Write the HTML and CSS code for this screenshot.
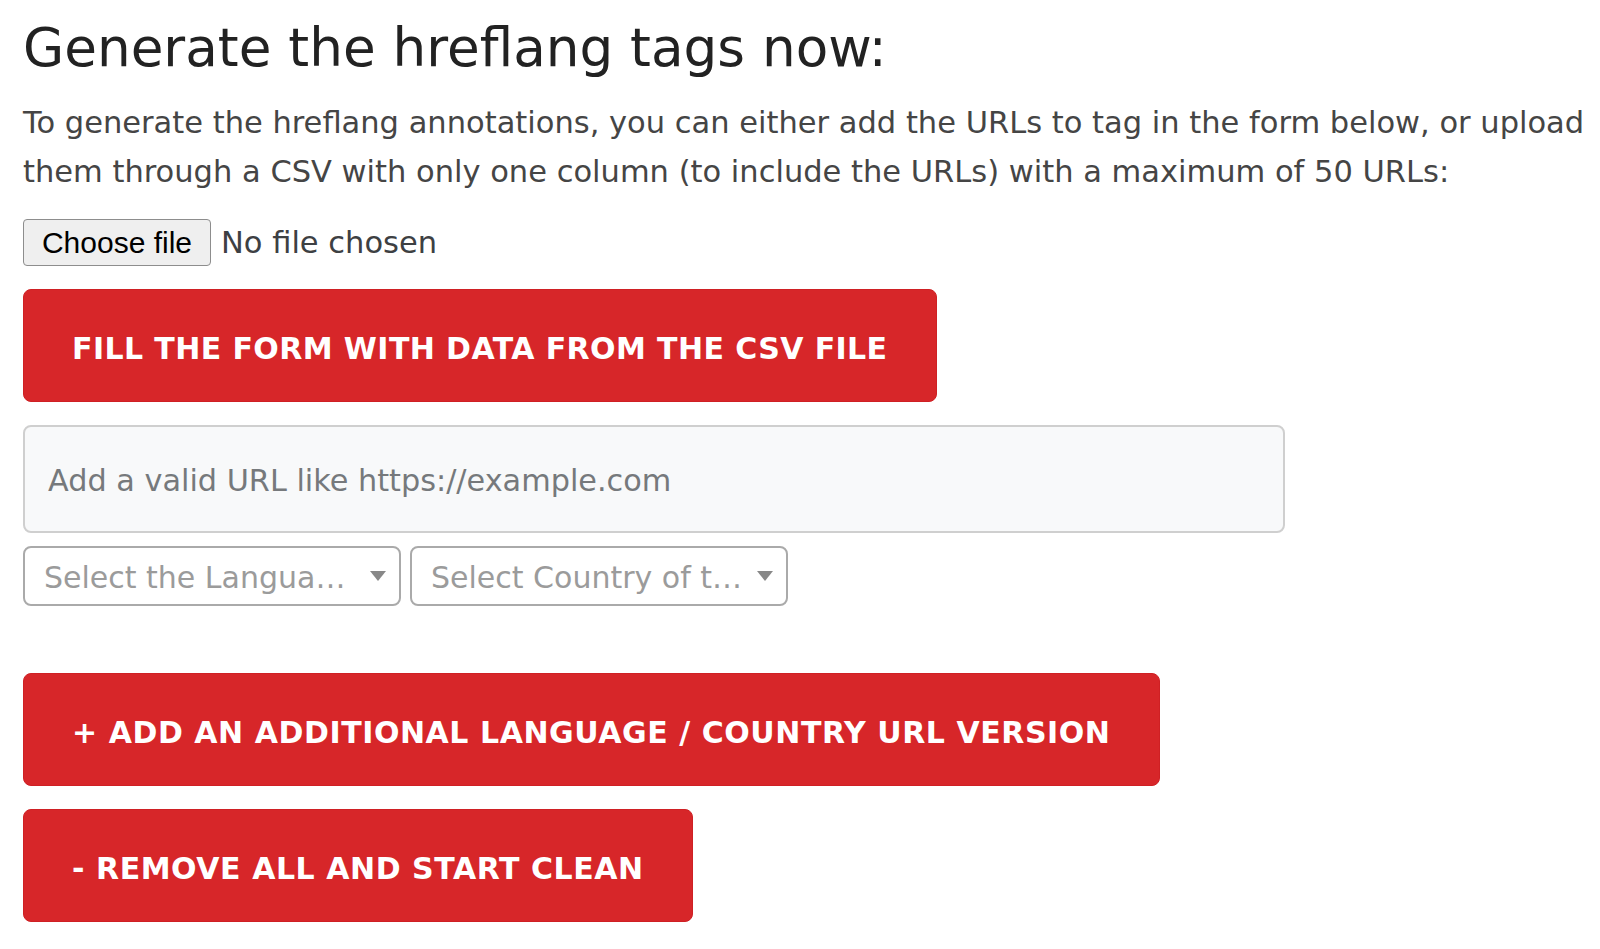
FILE: index.html
```html
<!DOCTYPE html>
<html lang="en">
<head>
<meta charset="utf-8">
<title>Generate the hreflang tags now</title>
<link rel="stylesheet" href="styles.css">
</head>
<body>
<main class="page">
  <h1 class="title">Generate the hreflang tags now:</h1>
  <p class="intro">To generate the hreflang annotations, you can either add the URLs to tag in the form below, or upload them through a CSV with only one column (to include the URLs) with a maximum of 50 URLs:</p>

  <div class="file-row">
    <label class="file-btn" for="csv">Choose file</label>
    <input class="file-input" id="csv" type="file" accept=".csv">
    <span class="file-name">No file chosen</span>
  </div>

  <div class="form">
    <button class="btn btn-fill" type="button">FILL THE FORM WITH DATA FROM THE CSV FILE</button>

    <input class="url-input" type="text" placeholder="Add a valid URL like https://example.com">

    <div class="select-row">
      <div class="select" title="Select the Language of the URL">
        <span class="select-text">Select the Langua…</span>
        <span class="select-arrow"></span>
      </div>
      <div class="select" title="Select Country of the URL">
        <span class="select-text">Select Country of t…</span>
        <span class="select-arrow"></span>
      </div>
    </div>

    <button class="btn btn-add" type="button">+ ADD AN ADDITIONAL LANGUAGE / COUNTRY URL VERSION</button>
    <button class="btn btn-remove" type="button">- REMOVE ALL AND START CLEAN</button>
  </div>
</main>
</body>
</html>
```

FILE: styles.css
```css
html, body {
  margin: 0;
  padding: 0;
  background: #ffffff;
}

.page {
  padding: 16px 0 0 23px;
  font-family: "DejaVu Sans", "Noto Sans", sans-serif;
  color: #444444;
}

.title {
  margin: 0;
  font-size: 53.2px;
  line-height: 64px;
  font-weight: normal;
  color: #222222;
  white-space: nowrap;
}

.intro {
  margin: 18px 0 0;
  font-size: 30.5px;
  line-height: 49px;
  color: #454545;
}

.file-row {
  margin-top: 23px;
  display: flex;
  align-items: center;
  gap: 10px;
  height: 47px;
}

.file-btn {
  box-sizing: border-box;
  display: flex;
  align-items: center;
  justify-content: center;
  width: 188px;
  height: 47px;
  border: 1.5px solid #8d8d8d;
  border-radius: 4px;
  background: #efefef;
  font-family: "Liberation Sans", Arial, sans-serif;
  font-size: 30px;
  color: #000000;
  cursor: default;
}

.file-input {
  display: none;
}

.file-name {
  font-size: 30.5px;
  color: #3d4043;
}

.form {
  display: flex;
  flex-direction: column;
  align-items: flex-start;
}

.btn {
  box-sizing: border-box;
  height: 113px;
  padding: 5px 48px 0;
  border: 1px solid #cf2024;
  border-radius: 8px;
  background: #d72629;
  color: #ffffff;
  font-family: "DejaVu Sans", "Noto Sans", sans-serif;
  font-weight: bold;
  font-size: 30px;
  letter-spacing: 0.55px;
  white-space: nowrap;
  cursor: pointer;
}

.btn-fill {
  margin-top: 23px;
  letter-spacing: 0.4px;
}

.url-input {
  box-sizing: border-box;
  margin-top: 23px;
  width: 1262px;
  height: 108px;
  padding: 2px 23px 0;
  border: 2px solid #cfcfcf;
  border-radius: 8px;
  background: #f8f9fa;
  font-family: "DejaVu Sans", "Noto Sans", sans-serif;
  font-size: 30.3px;
  color: #333333;
  outline: none;
}

.url-input::placeholder {
  color: #76797c;
  opacity: 1;
}

.select-row {
  margin-top: 13px;
  display: flex;
  gap: 9px;
}

.select {
  box-sizing: border-box;
  display: flex;
  align-items: center;
  width: 378px;
  height: 60px;
  padding: 3px 0 0 19px;
  border: 2px solid #aaaaaa;
  border-radius: 8px;
  background: #ffffff;
}

.select-text {
  flex: 1;
  min-width: 0;
  white-space: nowrap;
  font-size: 30px;
  color: #9b9b9b;
}

.select-arrow {
  flex: none;
  width: 0;
  height: 0;
  margin: -3px 13px 0 4px;
  border-left: 8px solid transparent;
  border-right: 8px solid transparent;
  border-top: 10px solid #888888;
}

.btn-add {
  margin-top: 67px;
}

.btn-remove {
  margin-top: 23px;
}
```
